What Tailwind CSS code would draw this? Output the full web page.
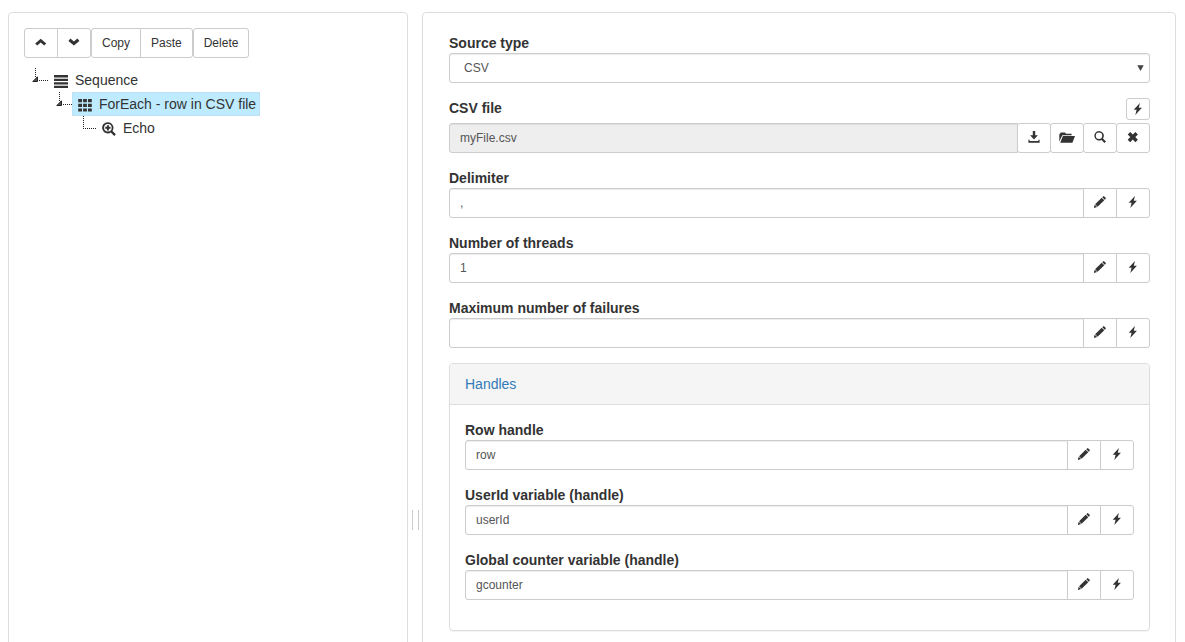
<!DOCTYPE html>
<html lang="en">
  <head>
    <meta charset="UTF-8" />
    <meta name="viewport" content="width=device-width, initial-scale=1.0" />
    <title>Plan editor</title>
    <script src="https://cdn.jsdelivr.net/npm/@tailwindcss/browser@4"></script>
  </head>
  <body class="h-screen overflow-hidden bg-white font-['Liberation_Sans',Arial,sans-serif] text-sm text-[#333]">
    <!-- Icons -->
    <svg class="hidden">
      <symbol id="i-up" viewBox="0 0 12 12">
        <path d="M5.7 1.7 11.2 6.4 9.2 8.6 5.7 5.6 2.2 8.6 .2 6.4z" />
      </symbol>
      <symbol id="i-down" viewBox="0 0 12 12">
        <path d="M5.9 8.6 .4 3.9 2.4 1.6 5.9 4.6 9.4 1.6 11.4 3.9z" />
      </symbol>
      <symbol id="i-bolt" viewBox="0 0 12 12">
        <path d="M7.9 0 1.7 6.7h2.9L3.3 12 9.9 4.8H6.8z" />
      </symbol>
      <symbol id="i-pencil" viewBox="0 0 12 12">
        <path d="M9.1.4q.6-.6 1.2 0l1.3 1.3q.5.6 0 1.2l-.8.8L8.3 1.2zM7.7 1.7 10.3 4.3 3.6 10.8 1.1 8.2zM.7 8.7 3.1 11.1-.3 12z" />
      </symbol>
      <symbol id="i-download" viewBox="0 0 12 12">
        <path d="M4.8 0h2.4v4.2h2.7L6 8.4 2.1 4.2h2.7zM.4 8.8h1.2v1.2h8.8V8.8h1.2v3H.4z" />
      </symbol>
      <symbol id="i-folder" viewBox="0 0 16 12">
        <path d="M.3 10.4V3.4L1.8 1.6h4.1l1.2 1.2h5.5v1.5H3.3zM3.9 5H16l-2.6 6.8H1.2z" />
      </symbol>
      <symbol id="i-search" viewBox="0 0 12 12">
        <path fill-rule="evenodd" d="M5 0a4.8 4.8 0 0 1 4 7.5l3 3-1.5 1.5-3-3A4.8 4.8 0 1 1 5 0zm0 1.6a3.2 3.2 0 1 0 0 6.4 3.2 3.2 0 0 0 0-6.4z" />
      </symbol>
      <symbol id="i-remove" viewBox="0 0 12 12">
        <path d="M3.2 1 5.8 3.6 8.4 1 10.9 3.5 8.3 6.1l2.6 2.6-2.5 2.5L5.8 8.6l-2.6 2.6L.7 8.7l2.6-2.6L.7 3.5z" />
      </symbol>
      <symbol id="i-list" viewBox="0 0 14 14">
        <path d="M0 1h14v2.5H0zM0 4.8h14V7H0zM0 8.3h14v2.2H0zM0 11.8h14V14H0z" />
      </symbol>
      <symbol id="i-grid" viewBox="0 0 14 14">
        <path d="M.2 1H4v3.2H.2zM5.1 1h3.8v3.2H5.1zM10 1h3.8v3.2H10zM.2 5.7H4v3.2H.2zM5.1 5.7h3.8v3.2H5.1zM10 5.7h3.8v3.2H10zM.2 10.4H4v3.2H.2zM5.1 10.4h3.8v3.2H5.1zM10 10.4h3.8v3.2H10z" />
      </symbol>
      <symbol id="i-zoom" viewBox="0 0 14 14">
        <path fill-rule="evenodd" d="M5.9.2a5.6 5.6 0 0 1 4.6 8.7l3.4 3.3-1.7 1.7-3.4-3.4A5.6 5.6 0 1 1 5.9.2zm0 1.8a3.8 3.8 0 1 0 0 7.6 3.8 3.8 0 0 0 0-7.6zM4.9 3.2h2v1.6h1.6v2H6.9v1.6h-2V6.8H3.3v-2h1.6z" />
      </symbol>
      <symbol id="i-open" viewBox="0 0 24 24">
        <path d="M11.5 0v10M15 12.5h9" fill="none" stroke="#222" stroke-dasharray="1 1" />
        <path d="M13.5 8.8v4.7H8.8z" fill="#555" stroke="#222" />
      </symbol>
      <symbol id="i-leaf" viewBox="0 0 24 24">
        <path d="M11.5 0v12M11 12.5h13" fill="none" stroke="#222" stroke-dasharray="1 1" />
      </symbol>
    </svg>

    <main class="grid min-h-[1028px] grid-cols-[400fr_14px_754fr] pt-3 pr-[9px] pl-2">
      <!-- Plan tree -->
      <section class="rounded border border-[#ddd] p-[15px] shadow-[0_1px_1px_rgba(0,0,0,.05)]">
        <div class="flex text-xs leading-[18px]">
          <div class="flex">
            <button type="button" aria-label="Move up" class="rounded-l-[3px] border border-[#ccc] px-2.5 py-[5px]">
              <svg class="size-3 fill-current"><use href="#i-up" /></svg>
            </button>
            <button type="button" aria-label="Move down" class="-ml-px rounded-r-[3px] border border-[#ccc] px-2.5 py-[5px]">
              <svg class="size-3 fill-current"><use href="#i-down" /></svg>
            </button>
          </div>
          <div class="flex">
            <button type="button" class="rounded-l-[3px] border border-[#ccc] px-2.5 py-[5px]">Copy</button>
            <button type="button" class="-ml-px rounded-r-[3px] border border-[#ccc] px-2.5 py-[5px]">Paste</button>
          </div>
          <button type="button" class="rounded-[3px] border border-[#ccc] px-2.5 py-[5px]">Delete</button>
        </div>

        <ul class="mt-2.5 leading-6">
          <li>
            <div class="flex">
              <svg class="size-6"><use href="#i-open" /></svg>
              <a href="#" class="flex items-center gap-[7px] pr-1 pl-1.5">
                <svg class="mt-0.5 size-3.5 fill-current"><use href="#i-list" /></svg>Sequence
              </a>
            </div>
            <ul class="pl-6">
              <li>
                <div class="flex">
                  <svg class="size-6"><use href="#i-open" /></svg>
                  <a href="#" class="flex items-center gap-[7px] rounded-xs bg-[#beebff] pr-1 pl-1.5 shadow-[inset_0_0_1px_#999]">
                    <svg class="mt-0.5 size-3.5 fill-current"><use href="#i-grid" /></svg>ForEach - row in CSV file
                  </a>
                </div>
                <ul class="pl-6">
                  <li class="flex">
                    <svg class="size-6"><use href="#i-leaf" /></svg>
                    <a href="#" class="flex items-center gap-[7px] pr-1 pl-1.5">
                      <svg class="mt-0.5 size-3.5 fill-current"><use href="#i-zoom" /></svg>Echo
                    </a>
                  </li>
                </ul>
              </li>
            </ul>
          </li>
        </ul>
      </section>

      <!-- Splitter -->
      <div class="flex items-center justify-center">
        <div class="h-5 w-[7px] border-x border-[#ccc]"></div>
      </div>

      <!-- Properties -->
      <section class="rounded border border-[#ddd] py-5 pr-[25px] pl-[26px] shadow-[0_1px_1px_rgba(0,0,0,.05)]">
        <form class="flex flex-col gap-[15px] leading-5">
          <div>
            <label for="source" class="block font-bold">Source type</label>
            <div class="relative">
              <select id="source" class="block h-[30px] w-full appearance-none rounded-[3px] border border-[#ccc] bg-white px-3.5 text-xs text-[#555] shadow-[inset_0_1px_1px_rgba(0,0,0,.075)]">
                <option>CSV</option>
                <option>Excel</option>
                <option>SQL</option>
              </select>
              <svg class="pointer-events-none absolute top-3 right-1.5 h-1.5 w-[7px] fill-[#444]" viewBox="0 0 7 6"><path d="M.3.2h6.4L3.5 6z" /></svg>
            </div>
          </div>

          <div>
            <div class="mb-[3px] flex justify-between">
              <label for="file" class="font-bold">CSV file</label>
              <button type="button" aria-label="Dynamic expression" class="rounded-[3px] border border-[#ccc] px-[5px] py-1">
                <svg class="size-3 fill-current"><use href="#i-bolt" /></svg>
              </button>
            </div>
            <div class="flex">
              <input id="file" type="text" value="myFile.csv" readonly class="h-[30px] min-w-0 grow rounded-l-[3px] border border-[#ccc] bg-[#eee] px-2.5 text-xs text-[#555] shadow-[inset_0_1px_1px_rgba(0,0,0,.075)]" />
              <button type="button" aria-label="Download" class="-ml-px rounded-[3px] border border-[#ccc] bg-white px-2.5 pb-0.5">
                <svg class="size-3 fill-current"><use href="#i-download" /></svg>
              </button>
              <button type="button" aria-label="Open" class="-ml-px rounded-[3px] border border-[#ccc] bg-white px-2 pb-0.5">
                <svg class="h-3 w-4 fill-current"><use href="#i-folder" /></svg>
              </button>
              <button type="button" aria-label="Search" class="-ml-px rounded-[3px] border border-[#ccc] bg-white px-2.5 pb-0.5">
                <svg class="size-3 fill-current"><use href="#i-search" /></svg>
              </button>
              <button type="button" aria-label="Clear" class="-ml-px rounded-[3px] border border-[#ccc] bg-white px-2.5 pb-0.5">
                <svg class="size-3 fill-current"><use href="#i-remove" /></svg>
              </button>
            </div>
          </div>

          <div>
            <label for="delimiter" class="block font-bold">Delimiter</label>
            <div class="flex">
              <input id="delimiter" type="text" value="," class="h-[30px] min-w-0 grow rounded-l-[3px] border border-[#ccc] px-2.5 text-xs text-[#555] shadow-[inset_0_1px_1px_rgba(0,0,0,.075)]" />
              <button type="button" aria-label="Edit" class="-ml-px border border-[#ccc] bg-white px-2.5 pb-0.5">
                <svg class="size-3 overflow-visible fill-current"><use href="#i-pencil" /></svg>
              </button>
              <button type="button" aria-label="Dynamic expression" class="-ml-px rounded-r-[3px] border border-[#ccc] bg-white px-2.5 pb-0.5">
                <svg class="size-3 fill-current"><use href="#i-bolt" /></svg>
              </button>
            </div>
          </div>

          <div>
            <label for="threads" class="block font-bold">Number of threads</label>
            <div class="flex">
              <input id="threads" type="text" value="1" class="h-[30px] min-w-0 grow rounded-l-[3px] border border-[#ccc] px-2.5 text-xs text-[#555] shadow-[inset_0_1px_1px_rgba(0,0,0,.075)]" />
              <button type="button" aria-label="Edit" class="-ml-px border border-[#ccc] bg-white px-2.5 pb-0.5">
                <svg class="size-3 overflow-visible fill-current"><use href="#i-pencil" /></svg>
              </button>
              <button type="button" aria-label="Dynamic expression" class="-ml-px rounded-r-[3px] border border-[#ccc] bg-white px-2.5 pb-0.5">
                <svg class="size-3 fill-current"><use href="#i-bolt" /></svg>
              </button>
            </div>
          </div>

          <div>
            <label for="failures" class="block font-bold">Maximum number of failures</label>
            <div class="flex">
              <input id="failures" type="text" class="h-[30px] min-w-0 grow rounded-l-[3px] border border-[#ccc] px-2.5 text-xs text-[#555] shadow-[inset_0_1px_1px_rgba(0,0,0,.075)]" />
              <button type="button" aria-label="Edit" class="-ml-px border border-[#ccc] bg-white px-2.5 pb-0.5">
                <svg class="size-3 overflow-visible fill-current"><use href="#i-pencil" /></svg>
              </button>
              <button type="button" aria-label="Dynamic expression" class="-ml-px rounded-r-[3px] border border-[#ccc] bg-white px-2.5 pb-0.5">
                <svg class="size-3 fill-current"><use href="#i-bolt" /></svg>
              </button>
            </div>
          </div>

          <!-- Handles -->
          <div class="rounded border border-[#ddd] shadow-[0_1px_1px_rgba(0,0,0,.05)]">
            <div class="rounded-t-[3px] border-b border-[#ddd] bg-[#f5f5f5] px-[15px] py-2.5">
              <a href="#" class="text-[#337ab7]">Handles</a>
            </div>
            <div class="flex flex-col gap-[15px] px-[15px] pt-[15px] pb-[30px]">
              <div>
                <label for="row" class="block font-bold">Row handle</label>
                <div class="flex">
                  <input id="row" type="text" value="row" class="h-[30px] min-w-0 grow rounded-l-[3px] border border-[#ccc] px-2.5 text-xs text-[#555] shadow-[inset_0_1px_1px_rgba(0,0,0,.075)]" />
                  <button type="button" aria-label="Edit" class="-ml-px border border-[#ccc] bg-white px-2.5 pb-0.5">
                    <svg class="size-3 overflow-visible fill-current"><use href="#i-pencil" /></svg>
                  </button>
                  <button type="button" aria-label="Dynamic expression" class="-ml-px rounded-r-[3px] border border-[#ccc] bg-white px-2.5 pb-0.5">
                    <svg class="size-3 fill-current"><use href="#i-bolt" /></svg>
                  </button>
                </div>
              </div>
              <div>
                <label for="user" class="block font-bold">UserId variable (handle)</label>
                <div class="flex">
                  <input id="user" type="text" value="userId" class="h-[30px] min-w-0 grow rounded-l-[3px] border border-[#ccc] px-2.5 text-xs text-[#555] shadow-[inset_0_1px_1px_rgba(0,0,0,.075)]" />
                  <button type="button" aria-label="Edit" class="-ml-px border border-[#ccc] bg-white px-2.5 pb-0.5">
                    <svg class="size-3 overflow-visible fill-current"><use href="#i-pencil" /></svg>
                  </button>
                  <button type="button" aria-label="Dynamic expression" class="-ml-px rounded-r-[3px] border border-[#ccc] bg-white px-2.5 pb-0.5">
                    <svg class="size-3 fill-current"><use href="#i-bolt" /></svg>
                  </button>
                </div>
              </div>
              <div>
                <label for="counter" class="block font-bold">Global counter variable (handle)</label>
                <div class="flex">
                  <input id="counter" type="text" value="gcounter" class="h-[30px] min-w-0 grow rounded-l-[3px] border border-[#ccc] px-2.5 text-xs text-[#555] shadow-[inset_0_1px_1px_rgba(0,0,0,.075)]" />
                  <button type="button" aria-label="Edit" class="-ml-px border border-[#ccc] bg-white px-2.5 pb-0.5">
                    <svg class="size-3 overflow-visible fill-current"><use href="#i-pencil" /></svg>
                  </button>
                  <button type="button" aria-label="Dynamic expression" class="-ml-px rounded-r-[3px] border border-[#ccc] bg-white px-2.5 pb-0.5">
                    <svg class="size-3 fill-current"><use href="#i-bolt" /></svg>
                  </button>
                </div>
              </div>
            </div>
          </div>
        </form>
      </section>
    </main>
  </body>
</html>
